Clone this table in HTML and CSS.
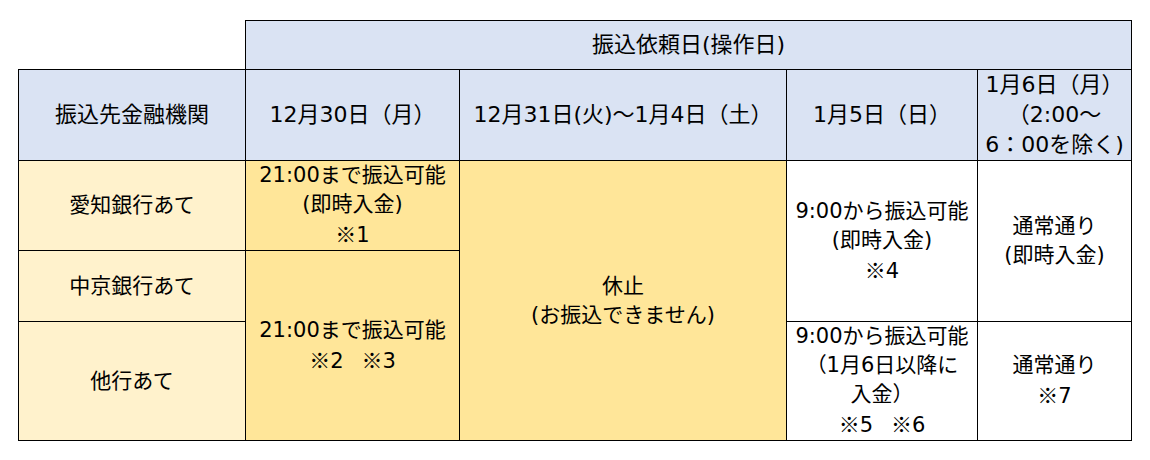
FILE: index.html
```html
<!DOCTYPE html>
<html lang="ja">
<head>
<meta charset="utf-8">
<title>年末年始の振込について</title>
<link rel="stylesheet" href="styles.css">
</head>
<body>
<table class="sched">
  <colgroup>
    <col class="c1"><col class="c2"><col class="c3"><col class="c4"><col class="c5">
  </colgroup>
  <tr class="r0">
    <td class="blank"></td>
    <td class="hd" colspan="4">振込依頼日(操作日)</td>
  </tr>
  <tr class="r1">
    <td class="hd">振込先金融機関</td>
    <td class="hd">12月30日（月）</td>
    <td class="hd">12月31日(火)～1月4日（土）</td>
    <td class="hd">1月5日（日）</td>
    <td class="hd">1月6日（月）<br>（2:00～<br>6：00を除く)</td>
  </tr>
  <tr class="r2">
    <td class="bank">愛知銀行あて</td>
    <td class="yel">21:00まで振込可能<br>(即時入金)<br><span class="mk">※</span>1</td>
    <td class="yel" rowspan="3">休止<br>(お振込できません)</td>
    <td class="wht" rowspan="2">9:00から振込可能<br>(即時入金)<br><span class="mk">※</span>4</td>
    <td class="wht" rowspan="2">通常通り<br>(即時入金)</td>
  </tr>
  <tr class="r3">
    <td class="bank">中京銀行あて</td>
    <td class="yel" rowspan="2">21:00まで振込可能<br><span class="mk">※</span>2<span class="gap"></span><span class="mk">※</span>3</td>
  </tr>
  <tr class="r4">
    <td class="bank">他行あて</td>
    <td class="wht">9:00から振込可能<br>（1月6日以降に<br>入金）<br><span class="mk">※</span>5<span class="gap"></span><span class="mk">※</span>6</td>
    <td class="wht">通常通り<br><span class="mk">※</span>7</td>
  </tr>
</table>
</body>
</html>
```
FILE: styles.css
```css
html, body {
  margin: 0;
  padding: 0;
  background: #ffffff;
}

body {
  font-family: "DejaVu Sans", "Noto Sans CJK JP", sans-serif;
  font-size: 21px;
  line-height: 29px;
  color: #000000;
}

.sched {
  margin: 20px 0 0 18px;
  border-collapse: collapse;
  table-layout: fixed;
  width: 1114px;
}

.c1 { width: 227px; }
.c2 { width: 214px; }
.c3 { width: 327px; }
.c4 { width: 191px; }
.c5 { width: 154px; }

.r0 { height: 49px; }
.r1 { height: 90px; }
.r2 { height: 90px; }
.r3 { height: 71px; }
.r4 { height: 119px; }

.sched td {
  border: 1px solid #000000;
  padding: 0;
  text-align: center;
  vertical-align: middle;
  white-space: nowrap;
}

.sched td.blank {
  border: none;
  background: transparent;
}

.mk {
  font-family: "Noto Sans CJK JP", sans-serif;
}

.gap {
  display: inline-block;
  width: 18px;
}

.hd {
  background: #dae3f3;
  font-size: 22px;
  line-height: 30px;
}

.bank { background: #fff2cc; }
.yel { background: #ffe699; }
.wht { background: #ffffff; }
```
